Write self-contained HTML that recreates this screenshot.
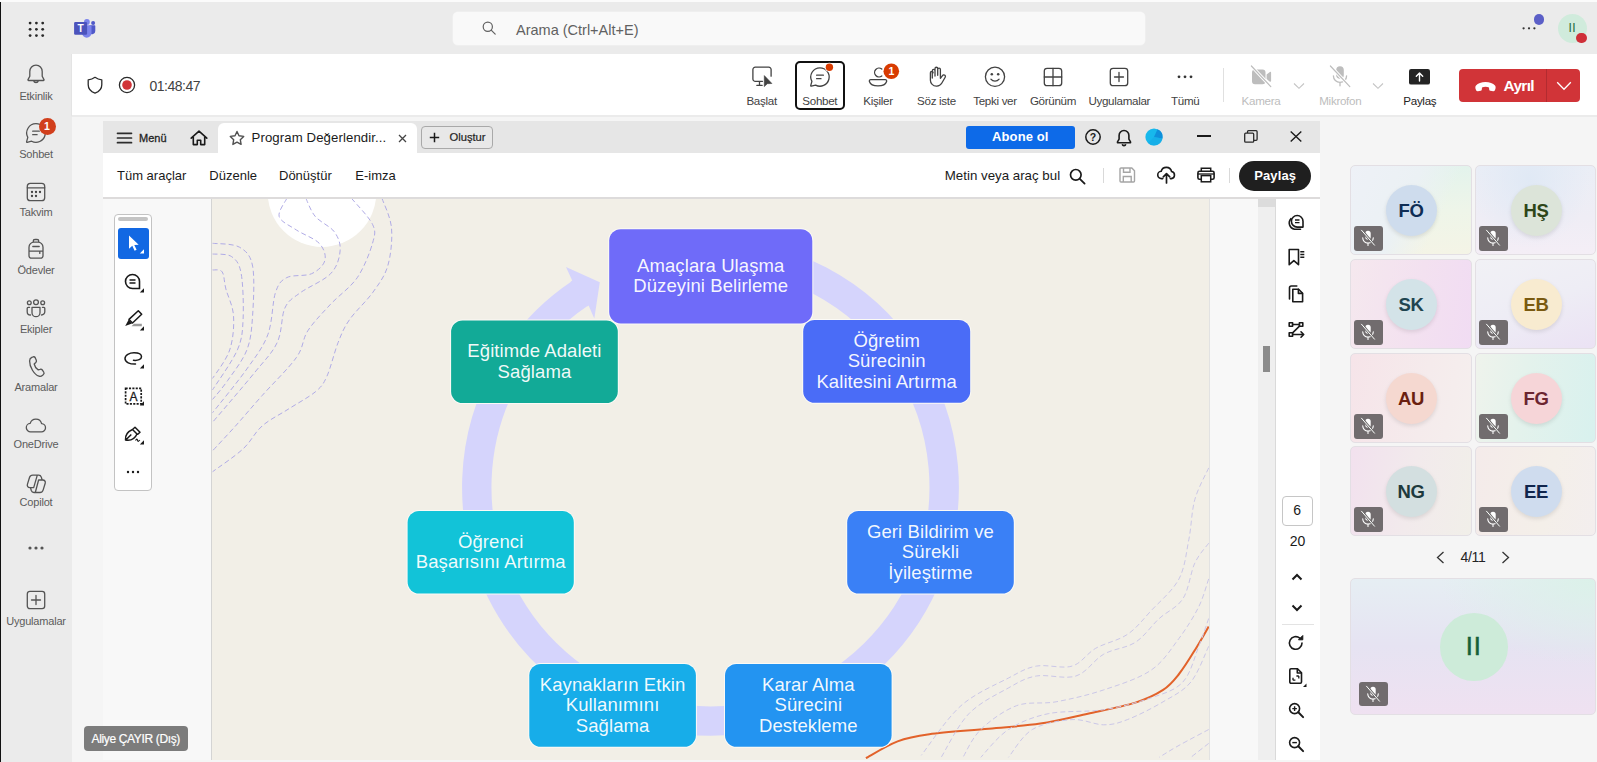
<!DOCTYPE html>
<html lang="tr">
<head>
<meta charset="utf-8">
<title>Teams</title>
<style>
*{box-sizing:border-box;margin:0;padding:0}
html,body{width:1597px;height:762px;overflow:hidden;background:#f5f5f5;font-family:"Liberation Sans",sans-serif;color:#242424}
.abs{position:absolute}
#root{position:relative;width:1597px;height:762px;overflow:hidden;background:#f5f5f5}
#topbar{left:0;top:0;width:1597px;height:54px;background:#ebebeb;border-top:2px solid #fbfbfb}
#edge{left:0;top:2px;width:2px;height:760px;background:linear-gradient(90deg,#111 0,#111 1.3px,#ebebeb 1.3px);z-index:20}
#rail{left:0;top:54px;width:72px;height:708px;background:#ebebeb}
#mtb{left:71px;top:54px;width:1526px;height:63px;background:#fff;border-bottom:2px solid #ebebeb;border-left:1px solid #e4e4e4}
.rl{position:absolute;left:0;width:72px;text-align:center;font-size:11px;color:#5c5c5c;letter-spacing:-0.2px}
.ri{position:absolute;left:24px;width:24px;height:24px}
.tl{position:absolute;width:80px;text-align:center;font-size:11.600px;color:#424242;top:94px;letter-spacing:-0.300px}
.ti{position:absolute;width:24px;height:24px;top:64px}
svg{display:block;overflow:visible}
.s{fill:none;stroke:#424242;stroke-width:1.3;stroke-linecap:round;stroke-linejoin:round}
.ri .s{stroke:#545454}
.k{fill:none;stroke:#1a1a1a;stroke-width:1.6;stroke-linecap:round;stroke-linejoin:round}
/* acrobat */
#acro{left:103px;top:121px;width:1217px;height:639px;background:#fff;overflow:hidden}
#atitle{left:0;top:0;width:1217px;height:32px;background:#e6e6e6}
#atool{left:0;top:32px;width:1217px;height:46px;background:#fff;border-bottom:2px solid #dddbdb}
.am{position:absolute;top:47px;font-size:14px;color:#1f1f1f}
#lpane{left:0;top:78px;width:109px;height:565px;background:#f8f8f8;border-right:1px solid #d4d4d4}
#page{left:109px;top:78px;width:997px;height:561px;background:#f2efe7;overflow:hidden}
#gut{left:1106px;top:78px;width:50px;height:565px;background:#f8f8f8;border-left:1px solid #e2e2e2}
#sb{left:1155px;top:78px;width:17px;height:565px;background:#efefef}
#rtool{left:1172px;top:78px;width:45px;height:565px;background:#fff;border-left:1px solid #dadada}
.box{position:absolute;color:rgba(255,255,255,.95);font-size:18.500px;line-height:20.400px;text-align:center;display:flex;align-items:center;justify-content:center;letter-spacing:0.1px}
/* participants */
.tile{position:absolute;width:122px;height:90px;border-radius:5px;border:1px solid #e3dfe4}
.av{position:absolute;left:34.500px;top:18.800px;width:51px;height:51px;border-radius:50%;font-size:18.500px;font-weight:bold;text-align:center;line-height:51px;letter-spacing:-.3px;box-shadow:0 2px 4px rgba(0,0,0,.10)}
.mic{position:absolute;left:3px;top:60px;width:29px;height:24.500px;border-radius:3px;background:#716c6e}
</style>
</head>
<body>
<div id="root">
<div id="topbar" class="abs"></div>
<div id="rail" class="abs"></div>
<div id="mtb" class="abs"></div>
<div id="edge" class="abs"></div>
<!--TOP-->
<svg class="abs" style="left:28px;top:21px" width="17" height="17"><g fill="#2a2a2a"><circle cx="2.10" cy="2.05" r="1.400"/><circle cx="8.40" cy="2.05" r="1.400"/><circle cx="14.70" cy="2.05" r="1.400"/><circle cx="2.10" cy="8.33" r="1.400"/><circle cx="8.40" cy="8.33" r="1.400"/><circle cx="14.70" cy="8.33" r="1.400"/><circle cx="2.10" cy="14.61" r="1.400"/><circle cx="8.40" cy="14.61" r="1.400"/><circle cx="14.70" cy="14.61" r="1.400"/></g></svg>
<svg class="abs" style="left:73px;top:17px" width="24" height="24" viewBox="0 0 24 24">
<circle cx="13.900" cy="4.900" r="2.900" fill="#7b83eb"/><circle cx="20.100" cy="6.100" r="2" fill="#5059c9"/>
<path d="M16.500 8.300h5.100c.4 0 .7.300.7.700v5a3.300 3.300 0 0 1-5.800 2.100z" fill="#5059c9"/>
<path d="M9 8.300h8.700c.4 0 .8.300.8.800v6.800a4.750 4.750 0 0 1-9.500 0z" fill="#7b83eb"/>
<rect x="1.100" y="5.100" width="13" height="12.700" rx="1.200" fill="#4b53bc"/>
<text x="7.650" y="15.400" font-family="Liberation Sans,sans-serif" font-weight="bold" font-size="10.200" fill="#fff" text-anchor="middle">T</text></svg>
<div class="abs" style="left:453px;top:12px;width:692px;height:33px;background:#f9f9f9;border-radius:5px;box-shadow:0 0 0 .5px #f4f4f4"></div>
<svg class="abs" style="left:481px;top:20px" width="16" height="16" viewBox="0 0 16 16"><circle cx="6.800" cy="6.800" r="4.600" fill="none" stroke="#616161" stroke-width="1.200"/><path d="M10.200 10.200l4 4" stroke="#616161" stroke-width="1.200" stroke-linecap="round"/></svg>
<div class="abs" style="left:516px;top:20.700px;font-size:14.500px;color:#616161;letter-spacing:0;line-height:18px">Arama (Ctrl+Alt+E)</div>
<svg class="abs" style="left:1521px;top:25px" width="16" height="6"><g fill="#333"><circle cx="2.600" cy="3.300" r="1.150"/><circle cx="8" cy="3.300" r="1.150"/><circle cx="13.400" cy="3.300" r="1.150"/></g></svg>
<div class="abs" style="left:1533.500px;top:13.800px;width:10.800px;height:10.800px;border-radius:50%;background:#5b5fc7"></div>
<div class="abs" style="left:1557.800px;top:13.800px;width:29px;height:29px;border-radius:50%;background:#d0ebdc;color:#1f6a3c;font-size:12px;font-weight:normal;text-align:center;line-height:29px;letter-spacing:.5px">II</div>
<div class="abs" style="left:1576px;top:32.900px;width:10.500px;height:10.500px;border-radius:50%;background:#cf2f39"></div>
<!--RAIL-->
<svg class="ri" style="top:62.0px" viewBox="0 0 24 24" width="24" height="24"><path class="s" d="M12 3.2c-3.6 0-6.2 2.8-6.2 6.4v4.6L4 17.6c-.2.5.1.9.6.9h14.8c.5 0 .8-.4.6-.9l-1.8-3.4V9.6c0-3.6-2.600-6.400-6.200-6.400zM9.600 18.700a2.500 2.500 0 0 0 4.800 0"/></svg>
<div class="rl" style="top:89.7px">Etkinlik</div>
<svg class="ri" style="top:121.0px" viewBox="0 0 24 24" width="24" height="24"><path class="s" d="M12 2.700a9.300 9.300 0 1 1-4.400 17.500L3.200 21.300c-.4.100-.7-.2-.6-.6l1.200-4.300A9.300 9.300 0 0 1 12 2.700zM8.700 10.200h6.600M8.700 13.700h4.400"/></svg>
<div class="rl" style="top:147.7px">Sohbet</div>
<svg class="ri" style="top:179.5px" viewBox="0 0 24 24" width="24" height="24"><rect class="s" x="3.300" y="3.300" width="17.400" height="17.400" rx="3"/><path class="s" d="M3.300 7.800h17.400"/><g fill="#424242"><circle cx="8" cy="12" r="1.150"/><circle cx="12" cy="12" r="1.150"/><circle cx="16" cy="12" r="1.150"/><circle cx="8" cy="16" r="1.150"/><circle cx="12" cy="16" r="1.150"/></g></svg>
<div class="rl" style="top:206.2px">Takvim</div>
<svg class="ri" style="top:237.0px" viewBox="0 0 24 24" width="24" height="24"><path class="s" d="M9.200 5.200V4.300a1.800 1.800 0 0 1 1.800-1.800h2a1.800 1.800 0 0 1 1.800 1.800v.9M5 10.200a5 5 0 0 1 5-5h4a5 5 0 0 1 5 5v8.600a2.400 2.400 0 0 1-2.400 2.400H7.400A2.400 2.400 0 0 1 5 18.800zM8.800 9.500h6.400M5 14.200h14M15.800 14.200v2.200"/></svg>
<div class="rl" style="top:264.2px">Ödevler</div>
<svg class="ri" style="top:296.0px" viewBox="0 0 24 24" width="24" height="24"><circle class="s" cx="12" cy="6.200" r="2.400"/><circle class="s" cx="5.300" cy="6.800" r="1.900"/><circle class="s" cx="18.700" cy="6.800" r="1.900"/><path class="s" d="M8 11.300h8v5.400a4 4 0 0 1-8 0zM5.600 11.300H4.200a1 1 0 0 0-1 1v3.400a3.300 3.300 0 0 0 3.300 3.300M18.400 11.300h1.400a1 1 0 0 1 1 1v3.400a3.300 3.300 0 0 1-3.300 3.300"/></svg>
<div class="rl" style="top:322.7px">Ekipler</div>
<svg class="ri" style="top:354.0px" viewBox="0 0 24 24" width="24" height="24"><path class="s" d="M7.800 3.300l1.300-.4c.9-.3 1.800.2 2.200 1l1 2.300c.3.800.1 1.700-.5 2.300l-1.600 1.500c.5 2.300 2.100 4.800 4 5.900l1.900-.6c.8-.3 1.700 0 2.200.7l1.400 2c.5.800.4 1.800-.2 2.400l-.9.900c-1 .9-2.300 1.300-3.600.9C10.200 20.700 5.500 12.900 5.600 7c0-1.700 1-3.200 2.200-3.700z"/></svg>
<div class="rl" style="top:380.7px">Aramalar</div>
<svg class="ri" style="top:413.0px" viewBox="0 0 24 24" width="24" height="24"><path class="s" d="M6.800 18.800a4.200 4.200 0 0 1-.6-8.400 5.900 5.900 0 0 1 11.400.300 4.050 4.050 0 0 1-.300 8.100z"/></svg>
<div class="rl" style="top:437.7px">OneDrive</div>
<svg class="ri" style="top:471.5px" viewBox="0 0 24 24" width="24" height="24"><path class="s" d="M13.300 3.100H8.700C7.200 3.100 6 4 5.500 5.500L3.400 12.400C2.900 14 4 15.600 5.700 15.600H9.700zM14.600 8h4.300c1.700 0 2.800 1.600 2.300 3.200l-2.100 6.900c-.5 1.500-1.700 2.400-3.200 2.400h-4.600zM13.300 3.100h1.400c1.300 0 2.200.8 2.600 2l.8 2.700M11.300 20.500H9.900c-1.300 0-2.200-.8-2.600-2l-.8-2.700"/></svg>
<div class="rl" style="top:496.2px">Copilot</div>
<svg class="ri" style="top:587.5px" viewBox="0 0 24 24" width="24" height="24"><rect class="s" x="3.300" y="3.300" width="17.400" height="17.400" rx="2.600"/><path class="s" d="M12 7.500v9M7.500 12h9"/></svg>
<div class="rl" style="top:614.7px">Uygulamalar</div>
<div class="abs" style="left:38.500px;top:117.500px;width:17px;height:17px;border-radius:50%;background:#cc4a31;background:#d13f1c;color:#fff;font-size:10.500px;font-weight:bold;text-align:center;line-height:17px">1</div>
<svg class="abs" style="left:26px;top:544px" width="20" height="8"><g fill="#555"><circle cx="4" cy="4" r="1.600"/><circle cx="10" cy="4" r="1.600"/><circle cx="16" cy="4" r="1.600"/></g></svg>
<!--MTB-->
<svg class="abs" style="left:85px;top:75px" width="20" height="20" viewBox="0 0 20 20"><path d="M10 2.300c2 1.500 4.200 2.300 6.800 2.500v5c0 4.200-2.700 6.900-6.800 8.300-4.100-1.400-6.800-4.100-6.800-8.300v-5C5.800 4.600 8 3.800 10 2.300z" fill="none" stroke="#2a2a2a" stroke-width="1.300" stroke-linejoin="round"/></svg>
<svg class="abs" style="left:117px;top:75px" width="20" height="20" viewBox="0 0 20 20"><circle cx="10" cy="10" r="7.600" fill="none" stroke="#2a2a2a" stroke-width="1.300"/><circle cx="10" cy="10" r="4.800" fill="#d13438"/></svg>
<div class="abs" style="left:149.500px;top:77px;font-size:14px;color:#424242;letter-spacing:-0.500px;line-height:18px">01:48:47</div>
<svg class="ti" style="left:750.0px" viewBox="0 0 24 24" width="24" height="24"><path class="s" d="M12.500 17.300H5.300a2.400 2.400 0 0 1-2.400-2.400V5.600a2.400 2.400 0 0 1 2.400-2.400h13.400a2.400 2.400 0 0 1 2.400 2.400v6.600M6.800 21.300h5.400M9.500 17.500v3.600"/><path d="M14.300 11.600v11l3-2.900 4.600-.2z" fill="#424242" stroke="#424242" stroke-width=".6" stroke-linejoin="round"/></svg>
<div class="tl" style="left:721.6px;color:#424242">Başlat</div>
<div class="abs" style="left:795px;top:60.500px;width:50px;height:49.500px;border:2px solid #111;border-radius:5px"></div>
<svg class="ti" style="left:807.5px" viewBox="0 0 24 24" width="24" height="24"><path class="s" d="M12 2.800a9.200 9.200 0 1 1-4.400 17.300L3.300 21.200c-.4.100-.7-.2-.6-.6l1.200-4.200A9.200 9.200 0 0 1 12 2.800zM8.600 10.200h6.800M8.600 13.700h4.400" transform="translate(0,1)"/><circle cx="21.400" cy="3.300" r="4.600" fill="#fff"/><circle cx="21.400" cy="3.300" r="3.700" fill="#d83b01"/></svg>
<div class="tl" style="left:779.8px;color:#424242">Sohbet</div>
<svg class="ti" style="left:866.0px" viewBox="0 0 24 24" width="24" height="24"><path class="s" d="M15.800 4.300a4.400 4.400 0 1 0 0 6.800M4.800 14.800h14.400c1 0 1.700.9 1.400 1.900-.9 2.900-4 4.400-8.600 4.400s-7.700-1.500-8.600-4.400c-.3-1 .4-1.900 1.400-1.900z" transform="translate(0,.8)"/><circle cx="25.300" cy="7.200" r="8.600" fill="#fff"/><circle cx="25.300" cy="7.200" r="7.800" fill="#d83b01"/><text x="25.300" y="11" font-family="Liberation Sans,sans-serif" font-weight="bold" font-size="10.500" fill="#fff" text-anchor="middle">1</text></svg>
<div class="tl" style="left:838.0px;color:#424242">Kişiler</div>
<svg class="ti" style="left:924.7px" viewBox="0 0 24 24" width="24" height="24"><path class="s" d="M7.300 13.500V6.300a1.350 1.350 0 0 1 2.700 0v5.200M10 10.800V4.100a1.350 1.350 0 0 1 2.700 0v6.700M12.700 10.800V5a1.350 1.350 0 0 1 2.700 0v8.800l2.100-2.700c.6-.8 1.700-1 2.400-.4.600.5.700 1.300.3 2l-3.500 6.100c-1 1.700-2.800 2.800-4.800 2.800h-.6a5.900 5.900 0 0 1-5.900-5.900V8.300a1.350 1.350 0 0 1 2.700 0" transform="translate(0,0.500)"/></svg>
<div class="tl" style="left:896.5px;color:#424242">Söz iste</div>
<svg class="ti" style="left:983.0px" viewBox="0 0 24 24" width="24" height="24"><circle class="s" cx="12" cy="12.800" r="9.600"/><circle cx="8.800" cy="10.300" r="1.250" fill="#424242"/><circle cx="15.200" cy="10.300" r="1.250" fill="#424242"/><path class="s" d="M7.900 15.200a5.200 5.200 0 0 0 8.200 0"/></svg>
<div class="tl" style="left:955.0px;color:#424242">Tepki ver</div>
<svg class="ti" style="left:1041.0px" viewBox="0 0 24 24" width="24" height="24"><rect class="s" x="3.300" y="4.300" width="17.400" height="17.400" rx="2.800"/><path class="s" d="M12 4.300v17.400M3.300 13h17.400"/></svg>
<div class="tl" style="left:1013.0px;color:#424242">Görünüm</div>
<svg class="ti" style="left:1107.0px" viewBox="0 0 24 24" width="24" height="24"><rect class="s" x="3.300" y="4.300" width="17.400" height="17.400" rx="2.800"/><path class="s" d="M12 8.500v9M7.500 13h9"/></svg>
<div class="tl" style="left:1079.3px;color:#424242">Uygulamalar</div>
<svg class="ti" style="left:1173.0px" viewBox="0 0 24 24" width="24" height="24"><g fill="#333"><circle cx="6" cy="12.800" r="1.400"/><circle cx="12" cy="12.800" r="1.400"/><circle cx="18" cy="12.800" r="1.400"/></g></svg>
<div class="tl" style="left:1145.3px;color:#424242">Tümü</div>
<div class="abs" style="left:1223px;top:68px;width:1px;height:34px;background:#e0e0e0"></div>
<svg class="ti" style="left:1248.5px" viewBox="0 0 24 24" width="24" height="24"><path d="M3 8.400a3 3 0 0 1 3-3h7.500a3 3 0 0 1 3 3v8.800a3 3 0 0 1-3 3H6a3 3 0 0 1-3-3zM17.600 10.600l3.300-2.700c.5-.4 1.200 0 1.200.6v8.600c0 .6-.7 1-1.200.6l-3.300-2.700z" fill="#bdbdbd"/><path d="M2.400 2l19.400 20.600" stroke="#fff" stroke-width="3.200"/><path d="M2.400 2l19.400 20.600" stroke="#bdbdbd" stroke-width="1.200" stroke-linecap="round"/></svg>
<div class="tl" style="left:1221.0px;color:#bdbdbd">Kamera</div>
<svg class="abs" style="left:1293px;top:82px" width="12" height="8" viewBox="0 0 12 8"><path d="M1 1.500l5 4.800 5-4.800" fill="none" stroke="#c4c4c4" stroke-width="1.100"/></svg>
<svg class="ti" style="left:1327.5px" viewBox="0 0 24 24" width="24" height="24"><rect x="8.200" y="2.200" width="7.600" height="12.600" rx="3.800" fill="#bdbdbd"/><path d="M5.400 11.800a6.600 6.600 0 0 0 13.200 0M12 18.600v3.200" fill="none" stroke="#bdbdbd" stroke-width="1.300" stroke-linecap="round"/><path d="M2.400 2l19.400 20.600" stroke="#fff" stroke-width="3.200"/><path d="M2.400 2l19.400 20.600" stroke="#bdbdbd" stroke-width="1.200" stroke-linecap="round"/></svg>
<div class="tl" style="left:1300.3px;color:#bdbdbd">Mikrofon</div>
<svg class="abs" style="left:1372px;top:82px" width="12" height="8" viewBox="0 0 12 8"><path d="M1 1.500l5 4.800 5-4.800" fill="none" stroke="#c4c4c4" stroke-width="1.100"/></svg>
<svg class="abs" style="left:1408.500px;top:69px" width="21" height="16" viewBox="0 0 21 16"><rect width="21" height="15.600" rx="2.200" fill="#242424"/><path d="M10.500 12V4.300M7.300 7.200l3.200-3.100 3.200 3.100" fill="none" stroke="#fff" stroke-width="1.400" stroke-linecap="round" stroke-linejoin="round"/></svg>
<div class="tl" style="left:1379.8px;color:#242424">Paylaş</div>
<div class="abs" style="left:1459.400px;top:68.800px;width:120.500px;height:33.200px;background:#d13438;border-radius:4px"></div>
<div class="abs" style="left:1546px;top:68.800px;width:1px;height:33.200px;background:#b32b30"></div>
<svg class="abs" style="left:1474.500px;top:80.500px" width="21" height="11" viewBox="0 0 21 11"><path d="M10.500 1C6.500 1 2.800 2.300 1 4.600c-.8 1-.8 2.400-.3 3.700l.4 1c.3.700 1 1.100 1.800 1l2.600-.5c.7-.1 1.200-.7 1.300-1.400l.2-2c1-.5 2.200-.7 3.500-.7s2.500.2 3.500.7l.2 2c.1.700.6 1.300 1.300 1.400l2.600.5c.8.100 1.500-.3 1.800-1l.4-1c.5-1.300.5-2.700-.3-3.700C18.200 2.300 14.500 1 10.500 1z" fill="#fff"/></svg>
<div class="abs" style="left:1503.500px;top:76px;font-size:15.500px;font-weight:bold;color:#fff;letter-spacing:-0.700px;line-height:19px">Ayrıl</div>
<svg class="abs" style="left:1555.500px;top:81px" width="16" height="10" viewBox="0 0 16 10"><path d="M1.200 1.200l6.800 7 6.800-7" fill="none" stroke="#fff" stroke-width="1.300"/></svg>
<div id="acro" class="abs">
<div id="atitle" class="abs"></div>
<div id="atool" class="abs"></div>
<div id="lpane" class="abs"></div>
<div id="page" class="abs">
<!--PAGE-->
<svg class="abs" style="left:0;top:0" width="998" height="561" viewBox="212 199 998 561">
<style>.dl{fill:none;stroke:#b0abe6;stroke-width:1;stroke-dasharray:5 3}.dl2{fill:none;stroke:#cbc7e8;stroke-width:1;stroke-dasharray:5 3}.or{fill:none;stroke:#e2622a;stroke-width:2}</style>
<circle cx="322" cy="192.7" r="54.3" fill="#fff"/>
<path class="dl" d="M382.0 198.4C383.6 203.3 390.6 216.8 391.5 228.1C392.5 239.4 390.9 255.3 387.7 266.1C384.5 276.9 378.8 283.9 372.5 292.8C366.1 301.7 355.4 311.2 349.7 319.4C343.9 327.7 342.0 332.7 338.2 342.3C334.4 351.8 330.6 368.3 326.8 376.5C323.0 384.8 321.7 386.4 315.4 391.8C309.0 397.1 297.6 403.2 288.7 408.9C279.9 414.6 269.7 419.3 262.1 426.0C254.5 432.7 251.3 441.2 243.1 448.9C234.8 456.5 217.7 467.9 212.6 471.7"/>
<path class="dl" d="M351.6 198.4C355.0 202.7 369.0 216.8 372.5 224.3C376.0 231.7 375.0 234.4 372.5 243.3C370.0 252.2 364.2 267.4 357.3 277.6C350.3 287.7 338.9 295.3 330.6 304.2C322.4 313.1 313.5 322.0 307.8 330.8C302.1 339.7 304.0 346.7 296.4 357.5C288.7 368.3 272.3 384.1 262.1 395.6C251.9 407.0 243.7 416.8 235.5 426.0C227.2 435.2 216.4 446.6 212.6 450.8"/>
<path class="dl" d="M305.9 198.4C307.5 201.4 310.6 211.1 315.4 216.6C320.2 222.2 330.3 226.2 334.4 231.9C338.5 237.6 340.8 243.9 340.1 250.9C339.5 257.9 337.3 266.8 330.6 273.7C324.0 280.7 307.8 287.1 300.2 292.8C292.6 298.5 288.7 299.8 284.9 308.0C281.1 316.3 282.4 331.5 277.3 342.3C272.3 353.1 265.3 359.4 254.5 372.7C243.7 386.0 219.6 414.0 212.6 422.2"/>
<path class="dl" d="M286.8 198.4C285.6 201.4 277.6 211.4 279.2 216.6C280.8 221.9 289.7 225.5 296.4 230.0C303.0 234.4 314.4 238.2 319.2 243.3C324.0 248.4 326.2 255.3 324.9 260.4C323.6 265.5 317.9 270.9 311.6 273.7C305.2 276.6 292.9 274.4 286.8 277.6C280.8 280.7 278.6 283.3 275.4 292.8C272.3 302.3 272.6 322.0 267.8 334.7C263.1 347.3 256.1 355.9 246.9 368.9C237.7 381.9 218.3 405.4 212.6 412.7"/>
<path class="dl" d="M212.6 243.3C217.1 243.9 232.6 243.3 239.3 247.1C245.9 250.9 250.4 254.7 252.6 266.1C254.8 277.6 253.5 301.7 252.6 315.6C251.6 329.6 251.0 339.1 246.9 349.9C242.7 360.7 233.5 372.1 227.8 380.3C222.1 388.6 215.2 396.2 212.6 399.4"/>
<path class="dl" d="M212.6 254.0C215.8 254.4 226.9 253.3 231.6 256.6C236.4 259.9 239.3 263.3 241.2 273.7C243.1 284.2 243.7 306.7 243.1 319.4C242.4 332.1 242.4 338.1 237.4 349.9C232.3 361.6 216.7 383.2 212.6 389.8"/>
<path class="dl" d="M212.6 269.9C214.2 270.3 219.9 268.7 222.1 271.8C224.4 275.0 224.0 281.7 225.9 289.0C227.8 296.3 232.9 305.5 233.5 315.6C234.2 325.8 233.2 339.4 229.7 349.9C226.3 360.3 215.5 373.7 212.6 378.4"/>
<path class="or" d="M865.9 758.1C871.1 755.3 887.0 745.4 897.6 741.4C908.1 737.4 914.1 736.4 929.3 734.3C944.5 732.2 970.2 730.5 988.7 728.7C1007.2 726.9 1023.7 726.1 1040.2 723.6C1056.8 721.1 1072.0 717.2 1087.8 713.7C1103.7 710.2 1122.8 706.5 1135.4 702.6C1147.9 698.6 1155.9 694.6 1163.1 689.9C1170.4 685.1 1173.7 680.6 1179.0 674.0C1184.3 667.4 1189.9 658.2 1194.8 650.2C1199.8 642.3 1206.4 630.4 1208.7 626.5"/>
<path class="dl2" d="M1208.7 467.9C1206.4 473.2 1198.1 487.7 1194.8 499.6C1191.5 511.5 1191.5 526.1 1188.9 539.3C1186.2 552.5 1185.2 567.0 1179.0 578.9C1172.7 590.8 1159.8 601.4 1151.2 610.6C1142.6 619.9 1136.7 628.1 1127.4 634.4C1118.2 640.7 1105.0 643.0 1095.7 648.3C1086.5 653.6 1081.9 663.1 1072.0 666.1C1062.0 669.1 1046.9 664.1 1036.3 666.1C1025.7 668.1 1021.1 671.4 1008.5 678.0C996.0 684.6 975.5 692.9 961.0 705.7C946.4 718.6 927.9 747.0 921.3 755.3"/>
<path class="dl2" d="M1208.7 543.2C1206.4 546.5 1199.1 553.8 1194.8 563.1C1190.5 572.3 1188.9 589.5 1182.9 598.7C1177.0 608.0 1167.1 611.3 1159.2 618.5C1151.2 625.8 1144.6 636.4 1135.4 642.3C1126.1 648.3 1113.6 648.6 1103.7 654.2C1093.8 659.8 1087.2 672.4 1075.9 676.0C1064.7 679.6 1047.5 674.0 1036.3 676.0C1025.1 678.0 1019.8 681.6 1008.5 687.9C997.3 694.2 980.1 702.1 968.9 713.7C957.7 725.2 945.8 750.0 941.2 757.3"/>
<path class="dl2" d="M1208.7 578.9C1207.0 583.5 1203.7 596.7 1198.8 606.7C1193.8 616.6 1186.9 627.8 1179.0 638.4C1171.0 648.9 1163.8 661.5 1151.2 670.1C1138.7 678.7 1119.5 684.6 1103.7 689.9C1087.8 695.2 1070.6 699.1 1056.1 701.8C1041.6 704.4 1029.0 701.1 1016.5 705.7C1003.9 710.4 989.7 720.9 980.8 729.5C971.9 738.1 965.9 752.6 963.0 757.3"/>
<path class="dl2" d="M1208.7 618.5C1207.0 623.2 1203.1 635.7 1198.8 646.3C1194.5 656.9 1190.9 673.4 1182.9 682.0C1175.0 690.5 1164.4 693.2 1151.2 697.8C1138.0 702.4 1120.8 707.1 1103.7 709.7C1086.5 712.3 1064.0 710.4 1048.2 713.7C1032.3 717.0 1019.8 722.3 1008.5 729.5C997.3 736.8 985.4 752.6 980.8 757.3"/>
<path class="dl2" d="M1208.7 646.3C1205.7 652.2 1198.5 672.7 1190.9 682.0C1183.3 691.2 1173.7 695.5 1163.1 701.8C1152.5 708.1 1137.4 715.8 1127.4 719.6C1117.5 723.4 1112.9 724.8 1103.7 724.8C1094.4 724.8 1083.8 718.8 1072.0 719.6C1060.1 720.4 1042.9 723.2 1032.3 729.5C1021.8 735.8 1012.5 752.6 1008.5 757.3"/>
<path class="dl2" d="M1208.7 729.5C1203.7 732.2 1187.2 740.8 1179.0 745.4C1170.7 750.0 1162.5 755.3 1159.2 757.3"/>
<path class="dl2" d="M1208.7 743.4C1205.7 745.7 1193.8 755.0 1190.9 757.3"/>
<path d="M720.4 253.8A233.7 233.7 0 1 1 580.0 293.4" fill="none" stroke="#d5d4fc" stroke-width="29.4"/>
<path d="M599.8 282.2L566 267L572.2 280.6L570.5 282L587 306.6L588.6 305.4L594.3 318.4Z" fill="#d5d4fc"/>
<rect x="608.2" y="228.2" width="205.1" height="96.2" rx="12.5" fill="#fbfaf6"/><rect x="609.2" y="229.2" width="203.1" height="94.2" rx="11.5" fill="#6f6bf9"/>
<rect x="802.2" y="319.0" width="169.0" height="84.8" rx="12.5" fill="#fbfaf6"/><rect x="803.2" y="320.0" width="167.0" height="82.8" rx="11.5" fill="#4a6cf7"/>
<rect x="846.2" y="510.0" width="168.6" height="84.6" rx="12.5" fill="#fbfaf6"/><rect x="847.2" y="511.0" width="166.6" height="82.6" rx="11.5" fill="#3a80f6"/>
<rect x="724.0" y="663.0" width="168.6" height="84.8" rx="12.5" fill="#fbfaf6"/><rect x="725.0" y="664.0" width="166.6" height="82.8" rx="11.5" fill="#2394f1"/>
<rect x="528.3" y="663.0" width="168.6" height="84.8" rx="12.5" fill="#fbfaf6"/><rect x="529.3" y="664.0" width="166.6" height="82.8" rx="11.5" fill="#17ade9"/>
<rect x="406.6" y="510.0" width="168.2" height="84.6" rx="12.5" fill="#fbfaf6"/><rect x="407.6" y="511.0" width="166.2" height="82.6" rx="11.5" fill="#12c3d8"/>
<rect x="450.1" y="319.4" width="168.7" height="84.7" rx="12.5" fill="#fbfaf6"/><rect x="451.1" y="320.4" width="166.7" height="82.7" rx="11.5" fill="#12aa97"/>
</svg>
<div class="box" style="left:397.2px;top:30.2px;width:203.1px;height:94.2px"><span>Amaçlara Ulaşma<br>Düzeyini Belirleme</span></div>
<div class="box" style="left:591.2px;top:121.0px;width:167.0px;height:82.8px"><span>Öğretim<br>Sürecinin<br>Kalitesini Artırma</span></div>
<div class="box" style="left:635.2px;top:312.0px;width:166.6px;height:82.6px"><span>Geri Bildirim ve<br>Sürekli<br>İyileştirme</span></div>
<div class="box" style="left:513.0px;top:465.0px;width:166.6px;height:82.8px"><span>Karar Alma<br>Sürecini<br>Destekleme</span></div>
<div class="box" style="left:317.3px;top:465.0px;width:166.6px;height:82.8px"><span>Kaynakların Etkin<br>Kullanımını<br>Sağlama</span></div>
<div class="box" style="left:195.6px;top:312.0px;width:166.2px;height:82.6px"><span>Öğrenci<br>Başarısını Artırma</span></div>
<div class="box" style="left:239.1px;top:121.4px;width:166.7px;height:82.7px"><span>Eğitimde Adaleti<br>Sağlama</span></div>
</div>
<div id="gut" class="abs"></div>
<div id="sb" class="abs"></div>
<div id="rtool" class="abs"></div>
<!--ACRO-->
<svg class="abs" style="left:14.0px;top:10.7px" width="15" height="12" viewBox="0 0 15 12"><path d="M.5 1.300h14M.5 6h14M.5 10.700h14" stroke="#2c2c2c" stroke-width="1.700" stroke-linecap="round"/></svg>
<div class="abs" style="left:36.0px;top:9.5px;font-size:11px;color:#1f1f1f;line-height:14px;-webkit-text-stroke:.3px #1f1f1f">Menü</div>
<svg class="abs" style="left:86.7px;top:8.7px" width="18" height="16" viewBox="0 0 18 16"><path d="M1.200 8.200L9 1.200l7.800 7M3.300 7v7.600h4V10.300h3.400v4.300h4V7" fill="none" stroke="#1a1a1a" stroke-width="1.600" stroke-linecap="round" stroke-linejoin="round"/></svg>
<div class="abs" style="left:114.7px;top:1.500px;width:199px;height:31px;background:#fff;border-radius:6px 6px 0 0"></div>
<svg class="abs" style="left:125.6px;top:9.3px" width="16" height="16" viewBox="0 0 16 16"><path d="M8 1.500l2 4.300 4.700.6-3.400 3.300.8 4.700L8 12.100l-4.100 2.300.8-4.700L1.300 6.400 6 5.800z" fill="none" stroke="#505050" stroke-width="1.400" stroke-linejoin="round"/></svg>
<div class="abs" style="left:148.5px;top:8.5px;font-size:13.200px;color:#1a1a1a;line-height:16px;white-space:nowrap;letter-spacing:.1px">Program Değerlendir...</div>
<svg class="abs" style="left:294.5px;top:12.5px" width="9" height="9" viewBox="0 0 9 9"><path d="M1 1l7 7M8 1l-7 7" stroke="#444" stroke-width="1.300"/></svg>
<div class="abs" style="left:318.0px;top:5.0px;width:72px;height:23px;border:1px solid #a9a9a9;border-radius:4px;background:#e8e8e8"></div>
<svg class="abs" style="left:326.3px;top:10.7px" width="11" height="11" viewBox="0 0 11 11"><path d="M5.500 .8v9.400M.8 5.500h9.400" stroke="#1a1a1a" stroke-width="1.500"/></svg>
<div class="abs" style="left:346.5px;top:9.4px;font-size:11.200px;color:#1f1f1f;line-height:14px;-webkit-text-stroke:.2px #1f1f1f">Oluştur</div>
<div class="abs" style="left:862.8px;top:5.3px;width:109px;height:22.600px;background:#0d6ae8;border-radius:3px;color:#fff;font-size:13px;font-weight:bold;text-align:center;line-height:22px;letter-spacing:.1px">Abone ol</div>
<svg class="abs" style="left:981.3px;top:7.0px" width="18" height="18" viewBox="0 0 18 18"><circle cx="9" cy="9" r="7.200" fill="none" stroke="#1a1a1a" stroke-width="1.500"/><text x="9" y="12.700" font-family="Liberation Sans,sans-serif" font-weight="bold" font-size="10.500" text-anchor="middle" fill="#1a1a1a">?</text></svg>
<svg class="abs" style="left:1013.0px;top:7.5px" width="16" height="18" viewBox="0 0 16 18"><path d="M8 1.500c-2.900 0-4.900 2.200-4.900 5v3.600L1.500 12.900v.8h13v-.8l-1.600-2.800V6.500c0-2.800-2-5-4.900-5zM6.200 15.300a1.900 1.900 0 0 0 3.600 0" fill="none" stroke="#1a1a1a" stroke-width="1.600" stroke-linejoin="round"/></svg>
<svg class="abs" style="left:1042.2px;top:7.0px" width="18" height="18" viewBox="0 0 18 18"><circle cx="9" cy="9" r="8.600" fill="#17b8ec"/><path d="M9 9l3.500-7.800A8.600 8.600 0 0 1 17.500 10.500z" fill="#0f8fdb"/><path d="M9 9l8.500 1.500A8.600 8.600 0 0 1 3 15z" fill="#15a8e6" opacity=".6"/></svg>
<div class="abs" style="left:1093.8px;top:14.0px;width:14px;height:2px;background:#1a1a1a"></div>
<svg class="abs" style="left:1140.8px;top:8.5px" width="14" height="13" viewBox="0 0 14 13"><rect x=".7" y="3.200" width="9" height="9" rx="1" fill="none" stroke="#2a2a2a" stroke-width="1.300"/><path d="M3.500 3V1.700a1 1 0 0 1 1-1h7.600a1 1 0 0 1 1 1v7.600a1 1 0 0 1-1 1H9.900" fill="none" stroke="#2a2a2a" stroke-width="1.300"/></svg>
<svg class="abs" style="left:1187.4px;top:9.7px" width="12" height="11" viewBox="0 0 12 11"><path d="M.7.600l10.600 9.800M11.300.6L.7 10.400" stroke="#1a1a1a" stroke-width="1.400"/></svg>
<div class="abs" style="left:14.0px;top:47.0px;font-size:13px;color:#1a1a1a;line-height:16px;white-space:nowrap">Tüm araçlar</div>
<div class="abs" style="left:106.3px;top:47.0px;font-size:13px;color:#1a1a1a;line-height:16px;white-space:nowrap">Düzenle</div>
<div class="abs" style="left:176.0px;top:47.0px;font-size:13px;color:#1a1a1a;line-height:16px;white-space:nowrap">Dönüştür</div>
<div class="abs" style="left:252.3px;top:47.0px;font-size:13px;color:#1a1a1a;line-height:16px;white-space:nowrap">E-imza</div>
<div class="abs" style="left:841.8px;top:47.0px;font-size:13.300px;color:#1a1a1a;line-height:16px;white-space:nowrap">Metin veya araç bul</div>
<svg class="abs" style="left:966.0px;top:47.0px" width="17" height="17" viewBox="0 0 17 17"><circle cx="6.800" cy="6.800" r="5.300" fill="none" stroke="#1a1a1a" stroke-width="1.700"/><path d="M10.800 10.800l4.800 4.800" stroke="#1a1a1a" stroke-width="1.800" stroke-linecap="round"/></svg>
<div class="abs" style="left:1000.0px;top:47.0px;width:1px;height:15px;background:#d9d9d9"></div>
<svg class="abs" style="left:1015.5px;top:46.0px" width="17" height="16" viewBox="0 0 17 16"><path d="M2 1h10.800L15.500 3.700V14a1 1 0 0 1-1 1H2a1 1 0 0 1-1-1V2a1 1 0 0 1 1-1z" fill="none" stroke="#a5a5a5" stroke-width="1.400"/><path d="M4.500 1v4.300h6.500V1M4.300 15V9.500h7.900V15" fill="none" stroke="#a5a5a5" stroke-width="1.400"/></svg>
<svg class="abs" style="left:1053.8px;top:45.3px" width="19" height="18" viewBox="0 0 19 18"><path d="M5.800 12.600H4.700a3.700 3.700 0 0 1-.5-7.400 5.400 5.400 0 0 1 10.400.3 3.600 3.600 0 0 1-.3 7.100h-1" fill="none" stroke="#1a1a1a" stroke-width="1.600" stroke-linecap="round"/><path d="M9.500 17V8M6.300 10.800l3.200-3.200 3.200 3.200" fill="none" stroke="#1a1a1a" stroke-width="1.700" stroke-linecap="round" stroke-linejoin="round"/></svg>
<svg class="abs" style="left:1093.5px;top:46.0px" width="18" height="16" viewBox="0 0 18 16"><path d="M4.300 4.300V1.200h9.400v3.100" fill="none" stroke="#1a1a1a" stroke-width="1.500"/><rect x=".9" y="4.300" width="16.200" height="8" rx="1.600" fill="none" stroke="#1a1a1a" stroke-width="1.600"/><rect x="4.300" y="8.600" width="9.400" height="6.200" fill="#fff" stroke="#1a1a1a" stroke-width="1.500"/><path d="M.9 7h16.200" stroke="#1a1a1a" stroke-width="1.300"/></svg>
<div class="abs" style="left:1126.0px;top:47.0px;width:1px;height:15px;background:#d9d9d9"></div>
<div class="abs" style="left:1135.8px;top:39.6px;width:72.700px;height:30px;background:#1f1f1f;border-radius:15px;color:#fff;font-size:13px;font-weight:bold;text-align:center;line-height:29px;letter-spacing:.1px">Paylaş</div>
<div class="abs" style="left:11.3px;top:92.6px;width:37.500px;height:277px;background:#fff;border:1px solid #c3c3c3;border-radius:4px"></div>
<div class="abs" style="left:15.3px;top:96.0px;width:30px;height:3.500px;background:#c4c4c4;border-radius:2px"></div>
<div class="abs" style="left:14.6px;top:107.4px;width:31px;height:30.500px;background:#1268e3;border-radius:3px"></div>
<svg class="abs" style="left:18.0px;top:110.3px" width="24" height="24" viewBox="0 0 24 24"><path d="M8 4.500v13.300l3.300-3 2.300 5 2-1-2.300-4.800 4.400-.300z" fill="#fff"/><path d="M23 22.5v-4.200l-4.200 4.200z" fill="#fff"/></svg>
<svg class="abs" style="left:18.0px;top:148.8px" width="24" height="24" viewBox="0 0 24 24"><path d="M12 4.500a7 7 0 1 0 0 14h7v-7a7 7 0 0 0-7-7z" fill="none" stroke="#1a1a1a" stroke-width="1.600" transform="translate(-.5,0)"/><path d="M8.500 10h6M8.500 13h6" stroke="#1a1a1a" stroke-width="1.400"/><path d="M23 22.5v-4.200l-4.200 4.200z" fill="#1a1a1a"/></svg>
<svg class="abs" style="left:18.0px;top:187.0px" width="24" height="24" viewBox="0 0 24 24"><path d="M8 11.400L17.300 2.700l3.400 3.600L11.500 15z" fill="none" stroke="#1a1a1a" stroke-width="1.500" stroke-linejoin="round"/><path d="M7.600 11.800l3.500 3.700-6.900 2.500z" fill="#1a1a1a"/><path d="M10.500 18.300l2.500-2.600h7.800v2.600z" fill="#9a9a9a"/><path d="M23 22.5v-4.200l-4.200 4.200z" fill="#1a1a1a"/></svg>
<svg class="abs" style="left:18.0px;top:225.2px" width="24" height="24" viewBox="0 0 24 24"><path d="M14.500 18.100C9 18.300 4 16.300 4 12.600 4 8.800 8.500 6.800 13 6.800c4.500 0 7.500 1.500 7.500 4s-3.500 4-8 3.500" fill="none" stroke="#1a1a1a" stroke-width="1.500" stroke-linecap="round"/><path d="M23 22.5v-4.200l-4.200 4.200z" fill="#1a1a1a"/></svg>
<svg class="abs" style="left:18.0px;top:261.8px" width="24" height="24" viewBox="0 0 24 24"><rect x="4.600" y="5.300" width="15.600" height="15.600" fill="none" stroke="#1a1a1a" stroke-width="1.700" stroke-dasharray="2.100 1.270"/><text x="12.400" y="17.500" font-family="Liberation Sans,sans-serif" font-size="12" text-anchor="middle" fill="#1a1a1a" stroke="#1a1a1a" stroke-width=".3">A</text><path d="M23 22.5v-4.200l-4.200 4.200z" fill="#1a1a1a"/></svg>
<svg class="abs" style="left:18.0px;top:301.1px" width="24" height="24" viewBox="0 0 24 24"><path d="M4.500 18c-.5-4.500 2.500-8.500 7-10.500l4.500 4.500c-2 4.500-6 7-11.500 6zM11.500 7.500l2.500-2.300 5 5-2.500 2.300M5 17.800l5.300-5.300" fill="none" stroke="#1a1a1a" stroke-width="1.500" stroke-linejoin="round"/><path d="M14.500 18.500c1.200-1.800 1.700-1.800 2-.3s1 1.500 2.300-.2" fill="none" stroke="#1a1a1a" stroke-width="1.200"/><path d="M23 22.5v-4.200l-4.200 4.200z" fill="#1a1a1a"/></svg>
<svg class="abs" style="left:22.8px;top:348.5px" width="14" height="4"><g fill="#1a1a1a"><circle cx="2" cy="2" r="1.200"/><circle cx="7" cy="2" r="1.200"/><circle cx="12" cy="2" r="1.200"/></g></svg>
<div class="abs" style="left:1155.0px;top:78px;width:17px;height:8px;background:#dcdcdc"></div>
<div class="abs" style="left:1160.0px;top:224.8px;width:7px;height:26px;background:#8b8b8b"></div>
<svg class="abs" style="left:1183.2px;top:91.0px" width="20" height="20" viewBox="0 0 20 20"><path d="M11.200 3.500a5.800 5.800 0 1 0 0 11.600h5.800V9.300a5.800 5.800 0 0 0-5.800-5.800z" fill="none" stroke="#1a1a1a" stroke-width="1.600" stroke-linejoin="round" stroke-linecap="round"/><path d="M5 6.500a6.500 6.500 0 0 0 3.500 10.800h6" fill="none" stroke="#1a1a1a" stroke-width="1.600" stroke-linejoin="round" stroke-linecap="round"/><path d="M9 8h4.500M9 10.600h4.500" stroke="#1a1a1a" stroke-width="1.300"/></svg>
<svg class="abs" style="left:1183.2px;top:126.3px" width="20" height="20" viewBox="0 0 20 20"><path d="M3.200 2.500h9.300v15.200l-4.650-4.100-4.650 4.100z" fill="none" stroke="#1a1a1a" stroke-width="1.600" stroke-linejoin="round" stroke-linecap="round"/><path d="M14.300 4.700h4M14.300 7.500h4M14.300 10.300h4" stroke="#1a1a1a" stroke-width="1.500"/></svg>
<svg class="abs" style="left:1183.2px;top:163.0px" width="20" height="20" viewBox="0 0 20 20"><path d="M6.800 5.200h5.800l4 4v8.500H6.800z" fill="none" stroke="#1a1a1a" stroke-width="1.600" stroke-linejoin="round" stroke-linecap="round"/><path d="M12.400 5.400v4h4" fill="none" stroke="#1a1a1a" stroke-width="1.600" stroke-linejoin="round" stroke-linecap="round"/><path d="M3.500 15V3.800a1.800 1.800 0 0 1 1.800-1.800H10.800" fill="none" stroke="#1a1a1a" stroke-width="1.600" stroke-linejoin="round" stroke-linecap="round"/></svg>
<svg class="abs" style="left:1183.2px;top:197.6px" width="20" height="20" viewBox="0 0 20 20"><rect x="3.200" y="3.800" width="3.400" height="3.400" fill="none" stroke="#1a1a1a" stroke-width="1.600" stroke-linejoin="round" stroke-linecap="round"/><rect x="13.400" y="3.800" width="3.400" height="3.400" fill="none" stroke="#1a1a1a" stroke-width="1.600" stroke-linejoin="round" stroke-linecap="round"/><rect x="3.200" y="13.800" width="3.400" height="3.400" fill="none" stroke="#1a1a1a" stroke-width="1.600" stroke-linejoin="round" stroke-linecap="round"/><path d="M6.600 5.500h6.800M13.500 7.200L6.600 13.800M6.600 15.500h10.700M15 12.800l2.700 2.700-2.700 2.700" fill="none" stroke="#1a1a1a" stroke-width="1.600" stroke-linejoin="round" stroke-linecap="round"/></svg>
<div class="abs" style="left:1179.0px;top:374.5px;width:30.500px;height:30.500px;border:1px solid #c6c6c6;border-radius:4px;background:#fff;font-size:14px;color:#1a1a1a;text-align:center;line-height:26px">6</div>
<div class="abs" style="left:1179.5px;top:412.3px;width:30px;font-size:14px;color:#1a1a1a;text-align:center;line-height:16px">20</div>
<svg class="abs" style="left:1188.3px;top:452.0px" width="12" height="8" viewBox="0 0 12 8"><path d="M1.500 6.500L6 2l4.500 4.500" fill="none" stroke="#1a1a1a" stroke-width="2"/></svg>
<svg class="abs" style="left:1188.3px;top:483.0px" width="12" height="8" viewBox="0 0 12 8"><path d="M1.500 1.500L6 6l4.500-4.500" fill="none" stroke="#1a1a1a" stroke-width="2"/></svg>
<div class="abs" style="left:1179.0px;top:503.0px;width:32px;height:1px;background:#e3e3e3"></div>
<svg class="abs" style="left:1183.2px;top:512.0px" width="20" height="20" viewBox="0 0 20 20"><path d="M16 10a6.300 6.300 0 1 1-2.200-4.800" fill="none" stroke="#1a1a1a" stroke-width="1.600" stroke-linejoin="round" stroke-linecap="round"/><path d="M16.800 2.500v4.300h-4.300z" fill="#1a1a1a" stroke="#1a1a1a" stroke-width="1" stroke-linejoin="round"/></svg>
<svg class="abs" style="left:1183.2px;top:545.3px" width="20" height="20" viewBox="0 0 20 20"><path d="M5 2.800h6.500l4 4V16a1.200 1.200 0 0 1-1.200 1.200H5A1.200 1.200 0 0 1 3.800 16V4A1.200 1.200 0 0 1 5 2.800z" fill="none" stroke="#1a1a1a" stroke-width="1.600" stroke-linejoin="round" stroke-linecap="round"/><path d="M11.300 3v4h4" fill="none" stroke="#1a1a1a" stroke-width="1.600" stroke-linejoin="round" stroke-linecap="round"/><path d="M7 14.200h2.400M7 14.200v-2.400M12.800 10h-2.400M12.800 10v2.400" stroke="#1a1a1a" stroke-width="1.300" fill="none"/><path d="M20.500 21v-3.500L17 21z" fill="#1a1a1a"/></svg>
<svg class="abs" style="left:1183.2px;top:579.4px" width="20" height="20" viewBox="0 0 20 20"><circle cx="8.600" cy="8.600" r="5" fill="none" stroke="#1a1a1a" stroke-width="1.600" stroke-linejoin="round" stroke-linecap="round"/><path d="M12.300 12.300l4.800 4.800" stroke="#1a1a1a" stroke-width="2" stroke-linecap="round"/><path d="M8.600 6.300v4.600M6.300 8.600h4.600" stroke="#1a1a1a" stroke-width="1.400"/></svg>
<svg class="abs" style="left:1183.2px;top:612.7px" width="20" height="20" viewBox="0 0 20 20"><circle cx="8.600" cy="8.600" r="5" fill="none" stroke="#1a1a1a" stroke-width="1.600" stroke-linejoin="round" stroke-linecap="round"/><path d="M12.300 12.300l4.800 4.800" stroke="#1a1a1a" stroke-width="2" stroke-linecap="round"/><path d="M6.300 8.600h4.600" stroke="#1a1a1a" stroke-width="1.400"/></svg>
</div>
<!--PART-->
<div class="tile" style="left:1350.0px;top:165.0px;background:linear-gradient(115deg,#eef1f7 0%,#ebf1f4 45%,rgba(235,241,244,0) 70%),linear-gradient(180deg,#e3f3ec 0%,#eef5e9 50%,#f4f4e6 100%)"><div class="av" style="background:#cedced;color:#0f2d55">FÖ</div><div class="mic"><svg width="28" height="23" viewBox="0 0 28 23" style="position:absolute;left:0;top:0"><rect x="11.300" y="4.800" width="5.400" height="9" rx="2.700" fill="#fff"/><path d="M8.700 11.800a5.300 5.300 0 0 0 10.600 0M14 17.200v2.300" fill="none" stroke="#fff" stroke-width="1.100" stroke-linecap="round"/><path d="M7.500 4.200l13 15" stroke="#6f6d6d" stroke-width="2.600"/><path d="M7.500 4.200l13 15" stroke="#fff" stroke-width="1" stroke-linecap="round"/></svg></div></div>
<div class="tile" style="left:1475.0px;top:165.0px;width:121px;background:radial-gradient(ellipse at 45% 15%,#e0e9f5 0%,rgba(224,233,245,0) 65%),linear-gradient(180deg,#eaeef6 0%,#efedf5 60%,#f4eef6 100%)"><div class="av" style="background:#dce4d9;color:#2e4518">HŞ</div><div class="mic"><svg width="28" height="23" viewBox="0 0 28 23" style="position:absolute;left:0;top:0"><rect x="11.300" y="4.800" width="5.400" height="9" rx="2.700" fill="#fff"/><path d="M8.700 11.800a5.300 5.300 0 0 0 10.600 0M14 17.200v2.300" fill="none" stroke="#fff" stroke-width="1.100" stroke-linecap="round"/><path d="M7.500 4.200l13 15" stroke="#6f6d6d" stroke-width="2.600"/><path d="M7.500 4.200l13 15" stroke="#fff" stroke-width="1" stroke-linecap="round"/></svg></div></div>
<div class="tile" style="left:1350.0px;top:259.0px;background:linear-gradient(100deg,#f5e8ee 0%,#f3e1f0 55%,#f1dcf3 100%)"><div class="av" style="background:#d3e3e8;color:#1f4550">SK</div><div class="mic"><svg width="28" height="23" viewBox="0 0 28 23" style="position:absolute;left:0;top:0"><rect x="11.300" y="4.800" width="5.400" height="9" rx="2.700" fill="#fff"/><path d="M8.700 11.800a5.300 5.300 0 0 0 10.600 0M14 17.200v2.300" fill="none" stroke="#fff" stroke-width="1.100" stroke-linecap="round"/><path d="M7.500 4.200l13 15" stroke="#6f6d6d" stroke-width="2.600"/><path d="M7.500 4.200l13 15" stroke="#fff" stroke-width="1" stroke-linecap="round"/></svg></div></div>
<div class="tile" style="left:1475.0px;top:259.0px;width:121px;background:linear-gradient(160deg,#f1f1f5 0%,#eeedf5 50%,#ebe2f4 100%)"><div class="av" style="background:#f8ebd0;color:#7a5a10">EB</div><div class="mic"><svg width="28" height="23" viewBox="0 0 28 23" style="position:absolute;left:0;top:0"><rect x="11.300" y="4.800" width="5.400" height="9" rx="2.700" fill="#fff"/><path d="M8.700 11.800a5.300 5.300 0 0 0 10.600 0M14 17.200v2.300" fill="none" stroke="#fff" stroke-width="1.100" stroke-linecap="round"/><path d="M7.500 4.200l13 15" stroke="#6f6d6d" stroke-width="2.600"/><path d="M7.500 4.200l13 15" stroke="#fff" stroke-width="1" stroke-linecap="round"/></svg></div></div>
<div class="tile" style="left:1350.0px;top:353.0px;background:linear-gradient(100deg,#f6e4e9 0%,#f5ebec 60%,#f5efee 100%)"><div class="av" style="background:#f5d8d0;color:#6b1f10">AU</div><div class="mic"><svg width="28" height="23" viewBox="0 0 28 23" style="position:absolute;left:0;top:0"><rect x="11.300" y="4.800" width="5.400" height="9" rx="2.700" fill="#fff"/><path d="M8.700 11.800a5.300 5.300 0 0 0 10.600 0M14 17.200v2.300" fill="none" stroke="#fff" stroke-width="1.100" stroke-linecap="round"/><path d="M7.500 4.200l13 15" stroke="#6f6d6d" stroke-width="2.600"/><path d="M7.500 4.200l13 15" stroke="#fff" stroke-width="1" stroke-linecap="round"/></svg></div></div>
<div class="tile" style="left:1475.0px;top:353.0px;width:121px;background:linear-gradient(100deg,#eff3ec 0%,#e4f2ec 40%,#d8f1ee 100%)"><div class="av" style="background:#f6d5d8;color:#6b2530">FG</div><div class="mic"><svg width="28" height="23" viewBox="0 0 28 23" style="position:absolute;left:0;top:0"><rect x="11.300" y="4.800" width="5.400" height="9" rx="2.700" fill="#fff"/><path d="M8.700 11.800a5.300 5.300 0 0 0 10.600 0M14 17.200v2.300" fill="none" stroke="#fff" stroke-width="1.100" stroke-linecap="round"/><path d="M7.500 4.200l13 15" stroke="#6f6d6d" stroke-width="2.600"/><path d="M7.500 4.200l13 15" stroke="#fff" stroke-width="1" stroke-linecap="round"/></svg></div></div>
<div class="tile" style="left:1350.0px;top:446.0px;background:linear-gradient(100deg,#f2e1ee 0%,#f2eaec 50%,#f1efe9 100%)"><div class="av" style="background:#d3dfe0;color:#1d3a3d">NG</div><div class="mic"><svg width="28" height="23" viewBox="0 0 28 23" style="position:absolute;left:0;top:0"><rect x="11.300" y="4.800" width="5.400" height="9" rx="2.700" fill="#fff"/><path d="M8.700 11.800a5.300 5.300 0 0 0 10.600 0M14 17.200v2.300" fill="none" stroke="#fff" stroke-width="1.100" stroke-linecap="round"/><path d="M7.500 4.200l13 15" stroke="#6f6d6d" stroke-width="2.600"/><path d="M7.500 4.200l13 15" stroke="#fff" stroke-width="1" stroke-linecap="round"/></svg></div></div>
<div class="tile" style="left:1475.0px;top:446.0px;width:121px;background:linear-gradient(100deg,#f4ebea 0%,#f4efe9 60%,#f3eeee 100%)"><div class="av" style="background:#cfdcee;color:#10254d">EE</div><div class="mic"><svg width="28" height="23" viewBox="0 0 28 23" style="position:absolute;left:0;top:0"><rect x="11.300" y="4.800" width="5.400" height="9" rx="2.700" fill="#fff"/><path d="M8.700 11.800a5.300 5.300 0 0 0 10.600 0M14 17.200v2.300" fill="none" stroke="#fff" stroke-width="1.100" stroke-linecap="round"/><path d="M7.500 4.200l13 15" stroke="#6f6d6d" stroke-width="2.600"/><path d="M7.500 4.200l13 15" stroke="#fff" stroke-width="1" stroke-linecap="round"/></svg></div></div>
<svg class="abs" style="left:1436px;top:551px" width="9" height="13" viewBox="0 0 9 13"><path d="M7.500 1L1.500 6.500l6 5.500" fill="none" stroke="#333" stroke-width="1.300"/></svg>
<div class="abs" style="left:1448px;top:548px;width:50px;text-align:center;font-size:14px;color:#242424;line-height:18px;letter-spacing:-.3px">4/11</div>
<svg class="abs" style="left:1501px;top:551px" width="9" height="13" viewBox="0 0 9 13"><path d="M1.500 1l6 5.500-6 5.500" fill="none" stroke="#333" stroke-width="1.300"/></svg>
<div class="tile" style="left:1350px;top:578px;width:246px;height:137px;background:radial-gradient(ellipse at 100% 0%,#dbf1e9 0%,rgba(219,241,233,0) 45%),linear-gradient(180deg,#e6eef3 0%,#e6e3f2 50%,#efe1f1 100%)"><div class="av" style="left:89px;top:34px;width:67.500px;height:67.500px;line-height:67px;font-size:25.500px;font-weight:normal;-webkit-text-stroke:.5px #15603a;letter-spacing:1px;background:#cdebd9;color:#15603a;box-shadow:none">II</div><div class="mic" style="left:8px;top:102.500px"><svg width="28" height="23" viewBox="0 0 28 23" style="position:absolute;left:0;top:0"><rect x="11.300" y="4.800" width="5.400" height="9" rx="2.700" fill="#fff"/><path d="M8.700 11.800a5.300 5.300 0 0 0 10.600 0M14 17.200v2.300" fill="none" stroke="#fff" stroke-width="1.100" stroke-linecap="round"/><path d="M7.500 4.200l13 15" stroke="#6f6d6d" stroke-width="2.600"/><path d="M7.500 4.200l13 15" stroke="#fff" stroke-width="1" stroke-linecap="round"/></svg></div></div>
<div class="abs" style="left:84px;top:726px;width:103.500px;height:25px;background:#7c7c7c;-webkit-text-stroke:.2px #fff;border-radius:4px;color:#fff;font-size:12px;text-align:center;line-height:26px;letter-spacing:-.35px;white-space:nowrap">Aliye ÇAYIR (Dış)</div>
</div>
</body>
</html>
